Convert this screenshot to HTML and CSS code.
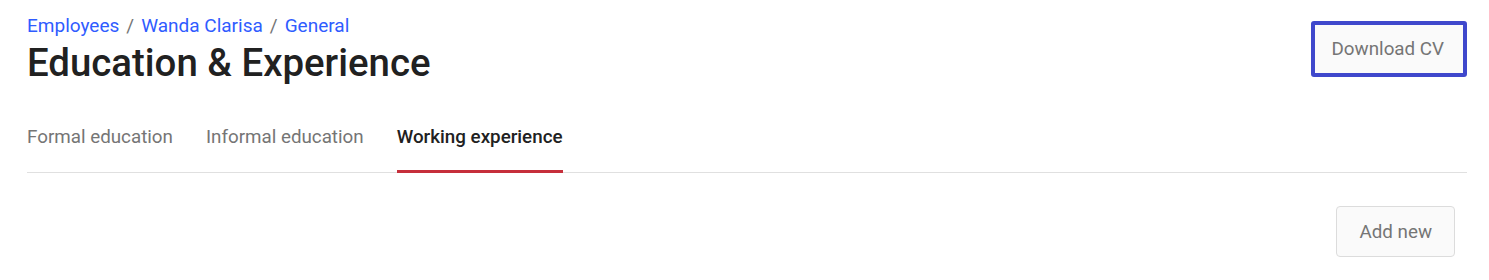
FILE: index.html
```html
<!DOCTYPE html>
<html lang="en">
<head>
<meta charset="utf-8">
<title>Education &amp; Experience</title>
<link rel="stylesheet" href="styles.css">
</head>
<body>
<div class="page">
  <header class="header">
    <div class="heading">
      <nav class="breadcrumb">
        <a href="#">Employees</a><span class="sep">/</span><a href="#">Wanda Clarisa</a><span class="sep">/</span><a href="#">General</a>
      </nav>
      <h1 class="title">Education &amp; Experience</h1>
    </div>
    <button class="btn btn-focus" type="button">Download CV</button>
  </header>
  <div class="tabs">
    <a class="tab" href="#">Formal education</a>
    <a class="tab" href="#">Informal education</a>
    <a class="tab active" href="#">Working experience</a>
  </div>
  <div class="actions">
    <button class="btn btn-add" type="button">Add new</button>
  </div>
</div>
</body>
</html>
```

FILE: styles.css
```css
* { box-sizing: border-box; }
html, body { margin: 0; padding: 0; background: #ffffff; }
body {
  font-family: Roboto, "Liberation Sans", Arial, sans-serif;
  color: #212121;
}
.page {
  padding: 14px 22px 0 27px;
}
.header {
  display: flex;
  justify-content: space-between;
  align-items: flex-start;
}
.breadcrumb {
  font-size: 19px;
  line-height: 24px;
  color: #757575;
}
.breadcrumb a {
  color: #2f5cff;
  text-decoration: none;
}
.breadcrumb .sep {
  margin: 0 7px;
}
.title {
  margin: 3px 0 0 0;
  font-size: 38.4px;
  line-height: 44px;
  font-weight: 500;
  color: #212121;
}
.btn {
  font-family: Roboto, "Liberation Sans", Arial, sans-serif;
  font-size: 18.8px;
  color: #757575;
  background: #fafafa;
  border: 1px solid #dcdcdc;
  border-radius: 4px;
  cursor: pointer;
}
.btn-focus {
  margin-top: 7px;
  height: 56px;
  padding: 0 19px 0 17px;
  border: 4px solid #3f48cc;
  border-radius: 3px;
}
.tabs {
  margin-top: 40px;
  display: flex;
  gap: 33px;
  border-bottom: 1px solid #e0e0e0;
}
.tab {
  font-size: 18.8px;
  line-height: 24px;
  color: #757575;
  text-decoration: none;
  padding-bottom: 21px;
  border-bottom: 3px solid transparent;
  margin-bottom: -1px;
}
.tab.active {
  color: #212121;
  font-weight: 500;
  border-bottom-color: #c62f3b;
}
.actions {
  display: flex;
  justify-content: flex-end;
  margin-top: 33px;
  padding-right: 12px;
}
.btn-add {
  height: 51px;
  padding: 0 22px;
}
```
